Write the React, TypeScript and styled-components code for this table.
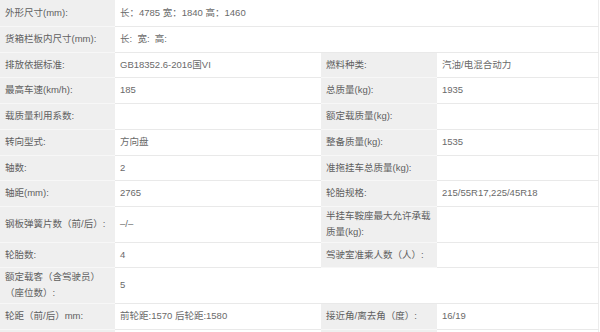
import styled, { createGlobalStyle } from "styled-components";

const Global = createGlobalStyle`
  html, body {
    margin: 0;
    padding: 0;
    background: #fff;
  }
  body {
    font-family: "Liberation Sans", "Noto Sans CJK SC", sans-serif;
    -webkit-font-smoothing: antialiased;
  }
`;

const Sheet = styled.table`
  width: 599px;
  border-collapse: collapse;
  table-layout: fixed;
  font-size: 9.5px;
`;

const Row = styled.tr<{ $h?: number }>`
  height: ${({ $h }) => $h ?? 26}px;
`;

const Label = styled.td`
  background: #efefef;
  color: #606060;
  padding: 0 4px 0 5px;
  line-height: 16px;
  vertical-align: middle;
  border-bottom: 1px solid #f7f7f7;
  white-space: nowrap;
`;

const Value = styled.td`
  color: #6a6a6a;
  padding: 0 4px 0 5px;
  line-height: 16px;
  vertical-align: middle;
  border-bottom: 1px solid #e9e9e9;
  white-space: nowrap;

  &:last-child {
    border-right: 1px solid #ececec;
  }
`;

type Pair = [string, string];

const rows: { left: Pair; right?: Pair; h?: number }[] = [
  { left: ["排放依据标准:", "GB18352.6-2016国VI"], right: ["燃料种类:", "汽油/电混合动力"], h: 25 },
  { left: ["最高车速(km/h):", "185"], right: ["总质量(kg):", "1935"] },
  { left: ["载质量利用系数:", ""], right: ["额定载质量(kg):", ""] },
  { left: ["转向型式:", "方向盘"], right: ["整备质量(kg):", "1535"] },
  { left: ["轴数:", "2"], right: ["准拖挂车总质量(kg):", ""], h: 25 },
  { left: ["轴距(mm):", "2765"], right: ["轮胎规格:", "215/55R17,225/45R18"] },
];

export default function App() {
  return (
    <>
      <Global />
      <Sheet>
        <colgroup>
          <col style={{ width: 115 }} />
          <col style={{ width: 206 }} />
          <col style={{ width: 116 }} />
          <col />
        </colgroup>
        <tbody>
          <Row>
            <Label>外形尺寸(mm):</Label>
            <Value colSpan={3}>长：4785 宽：1840 高：1460</Value>
          </Row>
          <Row>
            <Label>货箱栏板内尺寸(mm):</Label>
            <Value colSpan={3}>长:&nbsp; 宽:&nbsp; 高:</Value>
          </Row>
          {rows.map((r) => (
            <Row key={r.left[0]} $h={r.h}>
              <Label>{r.left[0]}</Label>
              <Value>{r.left[1]}</Value>
              <Label>{r.right?.[0]}</Label>
              <Value>{r.right?.[1]}</Value>
            </Row>
          ))}
          <Row $h={36}>
            <Label>钢板弹簧片数（前/后）:</Label>
            <Value>–/–</Value>
            <Label>
              半挂车鞍座最大允许承载
              <br />
              质量(kg):
            </Label>
            <Value />
          </Row>
          <Row $h={25}>
            <Label>轮胎数:</Label>
            <Value>4</Value>
            <Label>驾驶室准乘人数（人）:</Label>
            <Value />
          </Row>
          <Row $h={36}>
            <Label>
              额定载客（含驾驶员）
              <br />
              （座位数）:
            </Label>
            <Value>5</Value>
            <Value colSpan={2} />
          </Row>
          <Row>
            <Label>轮距（前/后）mm:</Label>
            <Value>前轮距:1570 后轮距:1580</Value>
            <Label>接近角/离去角（度）:</Label>
            <Value>16/19</Value>
          </Row>
          <Row>
            <Label />
            <Value />
            <Label />
            <Value />
          </Row>
        </tbody>
      </Sheet>
    </>
  );
}
